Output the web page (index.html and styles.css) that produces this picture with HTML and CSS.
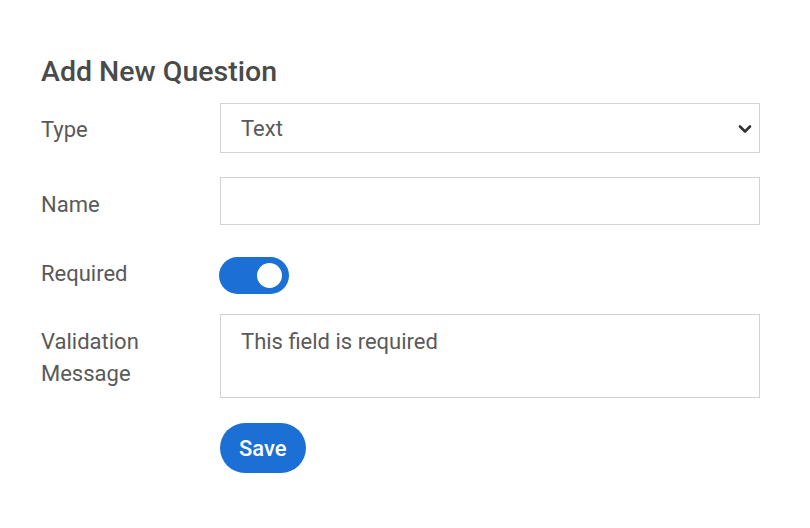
FILE: index.html
```html
<!DOCTYPE html>
<html lang="en">
<head>
<meta charset="utf-8">
<title>Add New Question</title>
<link rel="stylesheet" href="styles.css">
</head>
<body>
<form class="form">
  <h2 class="title">Add New Question</h2>
  <div class="row row-type">
    <label class="label label-type" for="qtype">Type</label>
    <div class="select-wrap">
      <select id="qtype" class="control select">
        <option>Text</option>
      </select>
      <svg class="chevron" width="14" height="10" viewBox="0 0 14 10"><path d="M2 2.5 L7 7.5 L12 2.5" fill="none" stroke="#333" stroke-width="2.6" stroke-linecap="round" stroke-linejoin="round"/></svg>
    </div>
  </div>
  <div class="row row-name">
    <label class="label label-name" for="qname">Name</label>
    <input id="qname" class="control input" type="text">
  </div>
  <div class="row row-req">
    <span class="label label-req">Required</span>
    <span class="toggle"><span class="knob"></span></span>
  </div>
  <div class="row row-msg">
    <label class="label label-top" for="qmsg">Validation Message</label>
    <textarea id="qmsg" class="control textarea">This field is required</textarea>
  </div>
  <div class="row row-save">
    <span></span>
    <div><button type="button" class="btn">Save</button></div>
  </div>
</form>
</body>
</html>
```
FILE: styles.css
```css
* { box-sizing: border-box; }
html, body { margin: 0; padding: 0; background: #fff; }
body {
  font-family: Roboto, "Noto Sans", "Liberation Sans", sans-serif;
  color: #595959;
}
.form {
  padding: 55px 50px 0 41px;
  width: 810px;
}
.title {
  margin: 0 0 15px;
  font-size: 28.5px;
  line-height: 33px;
  font-weight: 500;
  color: #4a4a4a;
}
.row {
  display: grid;
  grid-template-columns: 179px 540px;
  align-items: center;
}
.row-type { margin-bottom: 24px; }
.row-name { margin-bottom: 32px; }
.row-req { margin-bottom: 20px; }
.row-msg { margin-bottom: 25px; align-items: start; }
.label {
  font-size: 22px;
  line-height: 32px;
  color: #595959;
}
.label-type { padding-top: 3px; }
.label-name { padding-top: 8px; }
.label-req { padding-bottom: 4px; }
.label-top { padding-top: 12px; }
.control {
  display: block;
  width: 540px;
  border: 1px solid #d2d2d2;
  border-radius: 0;
  background: #fff;
  font-family: inherit;
  font-size: 22px;
  color: #5a5a5a;
  outline: none;
}
.select-wrap { position: relative; }
.select {
  height: 50px;
  padding: 0 40px 0 20px;
  appearance: none;
  -webkit-appearance: none;
}
.chevron {
  position: absolute;
  right: 8px;
  top: 21px;
}
.input { height: 48px; padding: 0 20px; }
.textarea {
  height: 84px;
  padding: 11px 20px;
  line-height: 32px;
  resize: none;
}
.toggle {
  display: flex;
  align-items: center;
  justify-content: flex-end;
  width: 70px;
  height: 37px;
  border-radius: 19px;
  background: #1b6fd5;
  padding-right: 7px;
  margin-left: -1px;
}
.knob {
  width: 25px;
  height: 25px;
  border-radius: 50%;
  background: #fff;
}
.btn {
  height: 50px;
  padding: 0 19px;
  border: none;
  border-radius: 25px;
  background: #1b6fd5;
  color: #fff;
  font-family: inherit;
  font-size: 22px;
  font-weight: 500;
  cursor: pointer;
}
```
